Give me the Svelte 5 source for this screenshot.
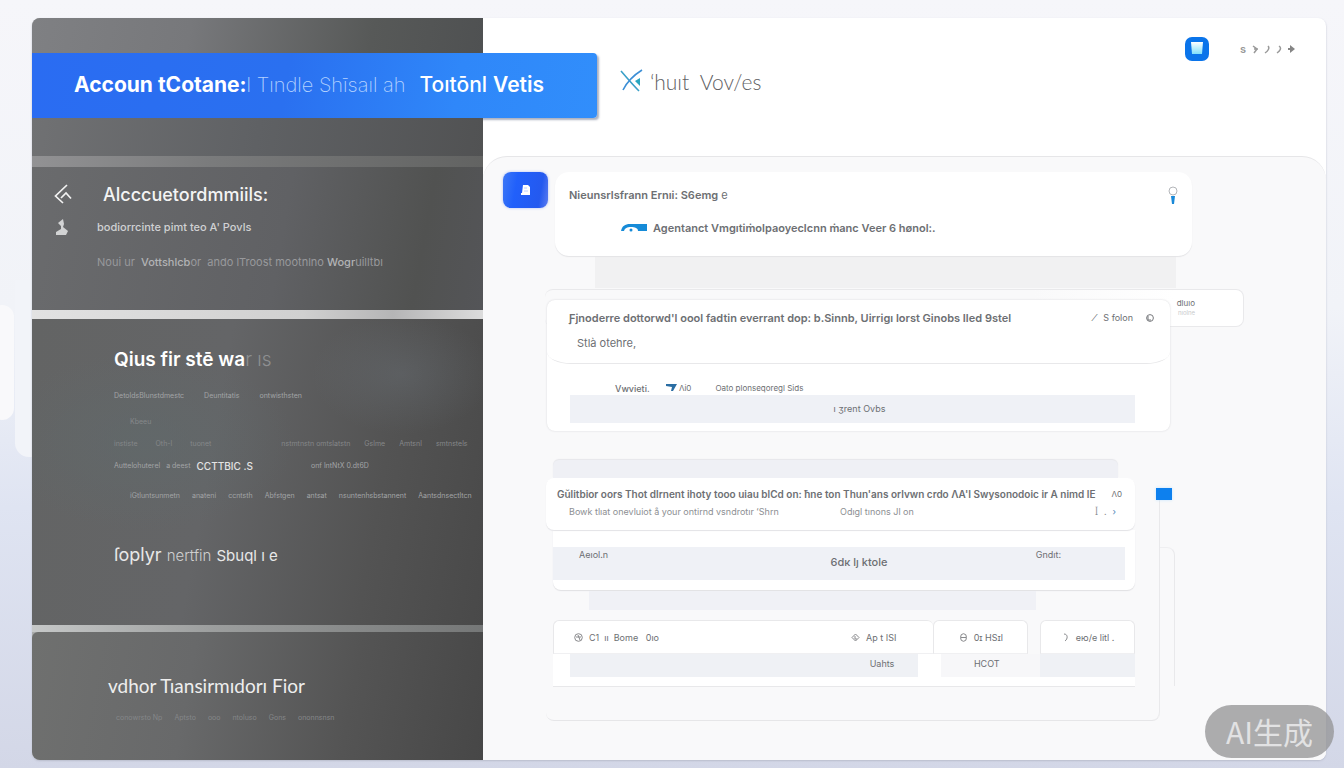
<script>
    const stewardRows = [
        { cls: 'mid', cells: ['DetoldsBlunstdmestc', 'Deuntitatis', 'ontwisthsten'] },
        { cls: 'faint indent loose', cells: ['Kbeeu'] },
        { cls: 'faint split', cells: ['instiste', 'Oth-l', 'tuonet'], right: ['nstmtnstn omtslatstn', 'Gslme', 'Amtsnl', 'smtnstels'] },
        { cls: 'mid split', cells: ['Auttelohuterel', 'a deest'], strong: 'CCTTBIC .S', right: ['onf lntNtX 0.dt6D'] },
        { cls: 'mid indent gap', cells: ['iGtluntsunmetn', 'anateni', 'ccntsth', 'Abfstgen', 'antsat', 'nsuntenhsbstannent', 'Aantsdnsectltcn'] },
    ];

    const fileCells = ['conowrsto Np', 'Aptsto', 'ooo', 'ntoluso', 'Gons', 'ononnsnsn'];

    const marks = ['M1 1l4 3-3 4M2 4h4', 'M4 1c2 2 0 5-3 7', 'M3 1c3 2 1 5-2 7'];
</script>

<div class="page">
    <div class="window">
        <aside class="sidebar">
            <div class="cap top"></div>
            <h1 class="banner">
                <span class="b1">Accoun tCotane:</span>
                <span class="b2">l Tındle Shīsaıl ah</span>
                <span class="b3">Toıtōnl</span>
                <span class="b4">Vetis</span>
            </h1>
            <div class="cap low"></div>
            <div class="rule rule-a"></div>

            <nav class="account">
                <a class="item" href="#account">
                    <svg width="18" height="20" viewBox="0 0 18 20" fill="none" stroke="#f2f2f2" stroke-width="1.700">
                        <path d="M13 1 1.500 12l7.500 7" />
                        <path d="M7 14l5-5 5 5.500" />
                    </svg>
                    <span class="big">Alcccuetordmmiils:</span>
                </a>
                <a class="item low-item" href="#pods">
                    <svg width="18" height="20" viewBox="0 0 18 20" fill="#d2d3d4">
                        <path d="M9 2l1 5-1 3 5 4-2 4H2v-3l5-3V9L4 6z" />
                    </svg>
                    <span class="sub">bodiorrcinte pimt teo A' Povls</span>
                </a>
                <a class="item" href="#vehicle">
                    <span class="blank"></span>
                    <span class="dim">Noui ur &nbsp;<b>Vottshlcb</b>or &nbsp;ando lTroost mootnlno <b>Wogr</b>uilltbı</span>
                </a>
            </nav>
            <div class="rule rule-b"></div>

            <section class="steward">
                <h2>Qius fir stē wa<span class="fade">r ıs</span></h2>
                <div class="rows">
                    {#each stewardRows as row}
                        <div class="row {row.cls}">
                            {#each row.cells as cell}
                                <span>{cell}</span>
                            {/each}
                            {#if row.strong}
                                <strong>{row.strong}</strong>
                            {/if}
                            {#if row.right}
                                <div class="right">
                                    {#each row.right as cell}
                                        <span>{cell}</span>
                                    {/each}
                                </div>
                            {/if}
                        </div>
                    {/each}
                </div>
                <h3>ſoplyr <small>nertfin</small> <em>Sbuql ı e</em></h3>
            </section>
            <div class="rule rule-c"></div>

            <section class="files">
                <h2>vdhor Tıansirmıdorı Fior</h2>
                <div class="row faint">
                    {#each fileCells as cell}
                        <span>{cell}</span>
                    {/each}
                </div>
            </section>
        </aside>

        <main>
            <header>
                <div class="brand">
                    <svg width="24" height="24" viewBox="0 0 24 24" fill="none">
                        <path d="M1 2c6 7 12 14 18 20" stroke="#3aa0c8" stroke-width="1.600" />
                        <path d="M22 1C14 6 7 13 3 21" stroke="#3d8fd6" stroke-width="1.600" />
                        <path d="M15 12l5-3v8z" fill="#2aa6c0" />
                    </svg>
                    <span>ʻhuıt &nbsp;Vov/es</span>
                </div>
                <div class="tools">
                    <button class="app" aria-label="Open">
                        <svg width="24" height="24" viewBox="0 0 24 24">
                            <defs>
                                <linearGradient id="cup" x1="0" y1="0" x2="0" y2="1">
                                    <stop offset="0" stop-color="#fff" />
                                    <stop offset="1" stop-color="#7fe0fb" />
                                </linearGradient>
                            </defs>
                            <rect width="24" height="24" rx="7" fill="#0a74ea" />
                            <path d="M6 5h12l-1 12H7z" fill="url(#cup)" />
                        </svg>
                    </button>
                    <div class="marks">
                        <span>s</span>
                        {#each marks as d}
                            <svg width="6" height="9" viewBox="0 0 6 9" fill="none" stroke="#9a9a9a" stroke-width="1.500"><path {d} /></svg>
                        {/each}
                        <svg width="7" height="8" viewBox="0 0 7 8"><path d="M0 3h2V0l5 4-5 4V5H0z" fill="#858585" /></svg>
                    </div>
                </div>
            </header>

            <div class="feed">
                <div class="post">
                    <div class="avatar">
                        <svg width="12" height="12" viewBox="0 0 12 12"><path d="M3 1h5l2 2v8H1V9h1z" fill="#fff" /><path d="M4 4h3M4 7h4" stroke="#bcd0ff" /></svg>
                    </div>
                    <article class="bubble">
                        <div class="line">
                            <b>Nieunsrlsfrann Ernıi: S6emg</b><span>&nbsp;e</span>
                            <svg class="key" width="10" height="18" viewBox="0 0 10 18">
                                <circle cx="5" cy="5" r="4" fill="none" stroke="#b4b6ba" />
                                <path d="M3 10h4l-1 8H4z" fill="#1989d8" />
                            </svg>
                        </div>
                        <div class="line inner">
                            <svg width="26" height="10" viewBox="0 0 26 10">
                                <path d="M0 8c1-5 4-7 9-7h17v7h-9c0-3-3-4-7-4S4 5 3 8z" fill="#168bd8" />
                                <circle cx="10" cy="7" r="1.500" fill="#168bd8" />
                            </svg>
                            <b>Agentanct Vmgıtiṁolpaoyeclcnn ṁanc Veer 6 hønol:.</b>
                        </div>
                    </article>
                </div>
                <div class="shade"></div>

                <div class="stack">
                    <div class="behind">
                        <span>dluıo</span>
                        <small>nıolne</small>
                    </div>
                    <article class="card">
                        <div class="upper">
                            <div class="line">
                                <b>Ƒjnoderre dottorwd'l oool fadtin everrant dop: b.Sinnb, Uirrigı lorst Ginobs Iled 9stel</b>
                                <div class="meta">
                                    <i>⁄</i>
                                    <span>S folon</span>
                                    <svg width="9" height="9" viewBox="0 0 9 9" fill="none" stroke="#77797d"><circle cx="5" cy="4" r="3.400" /><path d="M3 2v4h3" /></svg>
                                </div>
                            </div>
                            <div class="line second">Stlà otehre,</div>
                        </div>
                        <div class="tags">
                            <b>Vwvieti.</b>
                            <span class="flag"><svg width="11" height="7" viewBox="0 0 11 7"><path d="M0 0h11L7 7H5l1-4-6-1z" fill="#2a6da3" /></svg> Λi0</span>
                            <span>Oato plonseqoregl Sids</span>
                        </div>
                        <div class="band">ı ʒrent Ovbs</div>
                    </article>
                </div>

                <div class="frame">
                    <span class="pin"></span>
                    <div class="lid"></div>
                    <article class="note">
                        <div class="line compact">
                            <b>Gŭlitbior oors Thot dlrnent ihoty tooo uiau blCd on: ħne ton Thun'ans orlvwn crdo ΛA'I Swysonodoic ir A nimd lE</b>
                            <span class="end">Λ0</span>
                        </div>
                        <div class="notes">
                            <span>Bowk tlıat onevluiot å your ontirnd vsndrotır ʻShrn</span>
                            <span>Odıgl tınons Jl on</span>
                            <span class="nav"><i>ꟾ</i><i>.</i><i class="go">›</i></span>
                        </div>
                    </article>
                    <article class="totals">
                        <div class="strip">
                            <span>Aeıol.n</span>
                            <strong>6dк lȷ ktole</strong>
                            <span>Gndıt:</span>
                        </div>
                    </article>
                    <div class="shelf"></div>
                    <div class="tabs">
                        <div class="tab wide">
                            <button>
                                <svg width="9" height="9" viewBox="0 0 9 9" fill="none" stroke="#88898c"><circle cx="4.500" cy="4.500" r="3.800" /><path d="M2 4h5M4 2l2 5" /></svg>
                                <span>C1 &nbsp;ıı &nbsp;Bome &nbsp; 0ıo</span>
                            </button>
                            <button>
                                <svg width="9" height="9" viewBox="0 0 9 9" fill="none" stroke="#88898c"><path d="M4.500 1l3.500 3.500L4.500 8 1 4.500z" /><path d="M4 3v3h2" /></svg>
                                <span>Ap t ISI</span>
                            </button>
                        </div>
                        <div class="tab">
                            <button>
                                <svg width="9" height="9" viewBox="0 0 9 9" fill="none" stroke="#88898c"><ellipse cx="4.500" cy="4.500" rx="3" ry="3.800" /><path d="M2 4.500h5" /></svg>
                                <span>0ɪ HSɪl</span>
                            </button>
                        </div>
                        <div class="tab last">
                            <button>
                                <svg width="9" height="9" viewBox="0 0 9 9" fill="none" stroke="#88898c"><path d="M3 1c4 0 4 5 1 7" /></svg>
                                <span>ею/е litl .</span>
                            </button>
                        </div>
                    </div>
                    <div class="values">
                        <div class="value first"><span>Uahts</span></div>
                        <div class="value soft"><span>HCOT</span></div>
                        <div class="value last"></div>
                    </div>
                </div>
            </div>
        </main>
    </div>
    <div class="stamp">AI生成</div>
</div>

<style>
    :global(body) {
        margin: 0;
    }

    .page {
        position: relative;
        box-sizing: border-box;
        display: flex;
        min-height: 100vh;
        padding: 18px 18px 8px 32px;
        overflow: hidden;
        font-family: Inter, "Liberation Sans", sans-serif;
        color: #6d6f73;
        background: linear-gradient(180deg, #f6f6fa 0%, #f1f3f8 40%, #dfe4f2 66%, #d3d7e7 100%);
    }

    /* pale shapes on the left margin */
    .page::before,
    .page::after {
        content: "";
        position: absolute;
        background: #f9f9fb;
    }

    .page::before {
        left: 15px;
        top: 280px;
        width: 30px;
        height: 177px;
        border-radius: 0 0 0 14px;
        background: #f2f4f9;
    }

    .page::after {
        left: -10px;
        top: 305px;
        width: 24px;
        height: 115px;
        border-radius: 12px;
    }

    .window {
        position: relative;
        z-index: 1;
        flex: 1;
        display: grid;
        grid-template-columns: minmax(0, 451fr) minmax(0, 843fr);
        border-radius: 8px;
        background: #fff;
        box-shadow: 0 1px 2px #b9bdcc;
    }

    h1, h2, h3 {
        margin: 0;
        font-weight: 400;
    }

    a {
        color: inherit;
        text-decoration: none;
    }

    button {
        display: flex;
        align-items: center;
        gap: 6px;
        padding: 0;
        border: 0;
        background: none;
        font: inherit;
        color: inherit;
    }

    /* sidebar */
    .sidebar {
        position: relative;
        z-index: 2;
        display: flex;
        flex-direction: column;
        border-radius: 8px 0 0 8px;
        background: #a9abab;
        color: #f4f4f4;
    }

    .cap {
        background: linear-gradient(100deg, #7f8083 0%, #77787b 35%, #575958 75%, #4f5152 100%);
    }

    .top {
        height: 35px;
        border-radius: 8px 0 0 0;
    }

    .low {
        height: 38px;
        background: linear-gradient(100deg, #707173 0%, #5f6164 50%, #515253 100%);
    }

    .banner {
        display: flex;
        align-items: baseline;
        box-sizing: border-box;
        width: 125.3%;
        height: 65px;
        padding: 18px 42px;
        border-radius: 0 4px 4px 0;
        background: linear-gradient(100deg, #2a6cf2 0%, #2a70f0 45%, #2f87f9 75%, #318efb 100%);
        box-shadow: 2px 2px 2px rgba(90, 100, 130, .5);
        font-size: 21px;
        line-height: 28px;
        color: #fff;
        white-space: nowrap;
    }

    .b1 {
        font-weight: 700;
    }

    .b2 {
        margin-right: 14px;
        font-size: 20px;
        font-weight: 200;
        color: #b4d2ff;
    }

    .b3 {
        margin-right: 6px;
        font-weight: 500;
    }

    .b4 {
        font-weight: 600;
    }

    .rule-a {
        height: 11px;
        background: linear-gradient(90deg, #929294, #7a7b7c 40%, #626362);
    }

    .rule-b {
        height: 9px;
        background: linear-gradient(90deg, #e2e2e2, #d0d0d0 60%, #b5b5b6 80%, #dcdcdc);
    }

    .rule-c {
        height: 7px;
        background: linear-gradient(90deg, #c6c8c8, #9c9e9e 40%, #757777);
    }

    .account {
        padding: 12px 22px 31px;
        background: linear-gradient(100deg, #6a6b6d 0%, #606164 55%, #515251 85%, #545558 100%);
        white-space: nowrap;
    }

    .item {
        display: flex;
        align-items: center;
        gap: 25px;
        height: 34px;
    }

    .item:first-child {
        height: 30px;
    }

    .low-item {
        height: 36px;
    }

    .blank {
        width: 18px;
    }

    .big {
        padding-left: 6px;
        font-size: 18px;
        font-weight: 500;
    }

    .sub {
        font-size: 11px;
        font-weight: 500;
        color: #d0d1d3;
    }

    .dim {
        font-size: 11px;
        color: #98999c;
    }

    .dim b {
        font-weight: 500;
        color: #b2b3b5;
    }

    .steward {
        padding: 27px 0 55px 82px;
        background:
            radial-gradient(ellipse 90px 60px at 82% 18%, rgba(120, 130, 140, .25), transparent),
            radial-gradient(ellipse 150px 90px at 25% 40%, rgba(96, 106, 108, .6), transparent),
            linear-gradient(100deg, #636464 0%, #646567 40%, #535353 75%, #494949 100%);
        white-space: nowrap;
    }

    .steward h2 {
        font-size: 19px;
        font-weight: 600;
        line-height: 28px;
        color: #fff;
    }

    .fade {
        color: #8d8f91;
        font-weight: 300;
    }

    .rows {
        display: flex;
        flex-direction: column;
        gap: 6px;
        padding-top: 14px;
    }

    .row {
        display: flex;
        align-items: center;
        gap: 20px;
        font-size: 7px;
        line-height: 16px;
    }

    .mid {
        color: #a2a4a6;
    }

    .faint {
        color: #858789;
    }

    .indent {
        padding-left: 16px;
    }

    .loose {
        margin-top: 4px;
    }

    .gap {
        margin-top: 8px;
        gap: 12px;
    }

    .split {
        gap: 6px;
    }

    .split.faint {
        gap: 18px;
    }

    .row strong {
        font-size: 10px;
        font-weight: 500;
        color: #e4e4e4;
    }

    .right {
        flex: 1;
        display: flex;
        gap: 14px;
        padding-left: 52px;
    }

    .steward h3 {
        margin-top: 37px;
        font-size: 18px;
        line-height: 28px;
        color: #e8e8e8;
    }

    h3 small {
        font-size: 15px;
        font-weight: 300;
        color: #d0d0d0;
    }

    h3 em {
        font-size: 15px;
        font-style: normal;
    }

    .files {
        flex: 1;
        padding: 40px 0 34px 76px;
        border-radius: 6px 0 0 8px;
        background: linear-gradient(100deg, #6f706f 0%, #68696a 35%, #545454 70%, #474747 100%);
    }

    .files h2 {
        margin-bottom: 10px;
        font-family: Lato, sans-serif;
        font-size: 19px;
        line-height: 28px;
        color: #eee;
    }

    .files .row {
        gap: 12px;
        padding-left: 8px;
    }

    /* main column */
    main {
        display: flex;
        flex-direction: column;
        min-width: 0;
    }

    header {
        display: flex;
        justify-content: space-between;
        box-sizing: border-box;
        height: 138px;
        padding: 18px 31px 0 137px;
    }

    .brand {
        display: flex;
        align-items: center;
        gap: 6px;
        height: 90px;
        font-family: Lato, sans-serif;
        font-size: 21px;
        font-weight: 300;
        color: #5f6164;
    }

    .tools {
        display: flex;
        align-items: center;
        gap: 31px;
        height: 26px;
    }

    .marks {
        display: flex;
        align-items: center;
        gap: 6px;
        font-size: 11px;
        font-weight: 600;
        color: #999;
    }

    .feed {
        flex: 1;
        padding: 15px 0 39px;
        border-top: 1px solid #e6e6e8;
        border-radius: 24px 24px 8px 0;
        background: #f9f9fa;
    }

    .post {
        display: flex;
        gap: 7px;
        margin: 0 134px 0 20px;
    }

    .avatar {
        display: flex;
        align-items: center;
        justify-content: center;
        width: 45px;
        height: 36px;
        border-radius: 8px;
        background: linear-gradient(100deg, #3d78f6, #2160fb 30%, #2459ef 80%, #5b7cf0);
        box-shadow: 0 0 3px #aebcf2;
    }

    .bubble {
        flex: 1;
        padding: 14px 14px 18px;
        border-radius: 14px;
        background: #fff;
        box-shadow: 0 1px 1px #e4e4e6;
    }

    .line {
        display: flex;
        align-items: center;
        font-size: 11px;
        line-height: 18px;
        white-space: nowrap;
    }

    .line b {
        font-weight: 600;
    }

    .compact {
        font-size: 10px;
    }

    .key {
        margin-left: auto;
    }

    .inner {
        gap: 6px;
        padding: 15px 0 1px 52px;
    }

    .shade {
        height: 32px;
        margin: 0 150px 0 112px;
        background: #f1f1f2;
    }

    .stack {
        position: relative;
        margin: 12px 156px 0 64px;
    }

    .behind {
        position: absolute;
        top: -11px;
        left: -2px;
        right: -74px;
        display: flex;
        flex-direction: column;
        align-items: flex-end;
        box-sizing: border-box;
        height: 38px;
        padding: 8px 48px 0 0;
        border: 1px solid #e9e9eb;
        border-left: 0;
        border-radius: 8px;
        background: linear-gradient(90deg, #f9f9fa 70%, #fff 90%);
        font-size: 8px;
        line-height: 10px;
    }

    .behind small {
        font-size: 6px;
        color: #c9cacc;
    }

    .card {
        position: relative;
        padding-bottom: 8px;
        border-radius: 8px;
        background: #fff;
        box-shadow: 0 0 2px #d4d5d8;
    }

    .upper {
        padding: 9px 16px 11px 22px;
        border-bottom: 1px solid #e8e8ea;
        border-radius: 0 0 24px 24px / 0 0 12px 12px;
    }

    .second {
        padding: 7px 0 0 8px;
    }

    .meta {
        display: flex;
        align-items: center;
        gap: 8px;
        margin-left: auto;
        font-size: 9px;
    }

    .meta svg {
        margin-left: 4px;
    }

    .tags {
        display: flex;
        gap: 12px;
        padding: 18px 68px 0;
        font-size: 8px;
        line-height: 13px;
    }

    .tags b {
        font-weight: 500;
        font-size: 9px;
    }

    .flag {
        margin: 0 12px 0 4px;
    }

    .band {
        margin: 0 35px 0 23px;
        padding-left: 14px;
        background: #eff1f6;
        font-size: 9px;
        line-height: 28px;
        text-align: center;
    }

    .frame {
        position: relative;
        margin: 29px 166px 0 63px;
        padding: 0 25px 33px 0;
        border-bottom: 1px solid #e6e6e8;
        border-radius: 0 0 8px 8px;
    }

    .frame::before,
    .frame::after {
        content: "";
        position: absolute;
        top: 36px;
        right: 0;
        bottom: 0;
        width: 10px;
        border-right: 1px solid #e9e9eb;
        border-radius: 0 0 8px 0;
    }

    .frame::after {
        top: 87px;
        right: -15px;
        bottom: 34px;
        width: 14px;
        border-top: 1px solid #efeff1;
        border-radius: 0 8px 0 0;
    }

    .pin {
        position: absolute;
        top: 28px;
        right: -12px;
        width: 16px;
        height: 12px;
        background: #0d80ee;
        box-shadow: 0 0 3px #c4e4ff;
    }

    .lid {
        height: 18px;
        margin: 0 17px 0 7px;
        border-radius: 6px 6px 0 0;
        background: #eff0f5;
        box-shadow: 0 -1px 1px #e6e6ea;
    }

    .note {
        position: relative;
        padding: 7px 13px 9px 11px;
        border-radius: 8px;
        background: #fff;
        box-shadow: 0 1px 1px #e3e3e6;
    }

    .end {
        margin-left: auto;
        font-size: 8px;
    }

    .notes {
        display: grid;
        grid-template-columns: 271px 1fr auto;
        padding-left: 12px;
        font-size: 9px;
        line-height: 18px;
        color: #8d8f93;
        white-space: nowrap;
    }

    .nav {
        display: flex;
        gap: 6px;
        padding-right: 6px;
    }

    .nav i {
        font-style: normal;
    }

    .go {
        color: #4a86b8;
    }

    .totals {
        margin-left: 7px;
        padding: 17px 0 10px;
        border-radius: 0 0 8px 8px;
        background: #fff;
        box-shadow: 0 1px 1px #e0e0e3;
    }

    .strip {
        display: grid;
        grid-template-columns: 1fr auto 1fr;
        margin-right: 10px;
        padding: 0 64px 0 26px;
        background: #eff1f6;
        font-size: 9px;
        line-height: 16px;
    }

    .strip strong {
        padding: 3px 0 6px 78px;
        font-size: 11px;
        font-weight: 500;
        line-height: 24px;
    }

    .strip span:last-child {
        text-align: right;
    }

    .shelf {
        height: 19px;
        margin: 1px 99px 10px 43px;
        background: #f0f1f6;
    }

    .tabs,
    .values {
        display: grid;
        grid-template-columns: minmax(0, 381fr) minmax(0, 95fr) minmax(0, 107fr);
        margin-left: 7px;
        font-size: 9px;
        white-space: nowrap;
    }

    .tab {
        display: flex;
        align-items: center;
        justify-content: center;
        box-sizing: border-box;
        height: 34px;
        border: 1px solid #e8e8ea;
        border-bottom-color: #f0f0f2;
        border-radius: 6px 6px 0 0;
        background: #fff;
    }

    .wide {
        justify-content: space-between;
        padding: 0 37px 0 20px;
        border-right: 0;
    }

    .last {
        margin-left: 12px;
    }

    .values {
        padding-bottom: 9px;
        border-bottom: 1px solid #e8e8ea;
        background: #fff;
        line-height: 20px;
    }

    .value {
        height: 23px;
        background: #eff1f5;
    }

    .first {
        margin: 0 15px 0 17px;
        padding-right: 24px;
        text-align: right;
    }

    .soft {
        margin: 0 -12px 0 8px;
        padding-right: 8px;
        background: #f7f7f9;
        text-align: center;
    }

    .stamp {
        position: absolute;
        z-index: 3;
        right: 10px;
        bottom: 10px;
        padding: 0 21px;
        border-radius: 27px;
        background: rgba(145, 145, 147, .75);
        font-family: "Noto Sans CJK SC", sans-serif;
        font-size: 30px;
        line-height: 53px;
        color: #e2e2e3;
    }
</style>
